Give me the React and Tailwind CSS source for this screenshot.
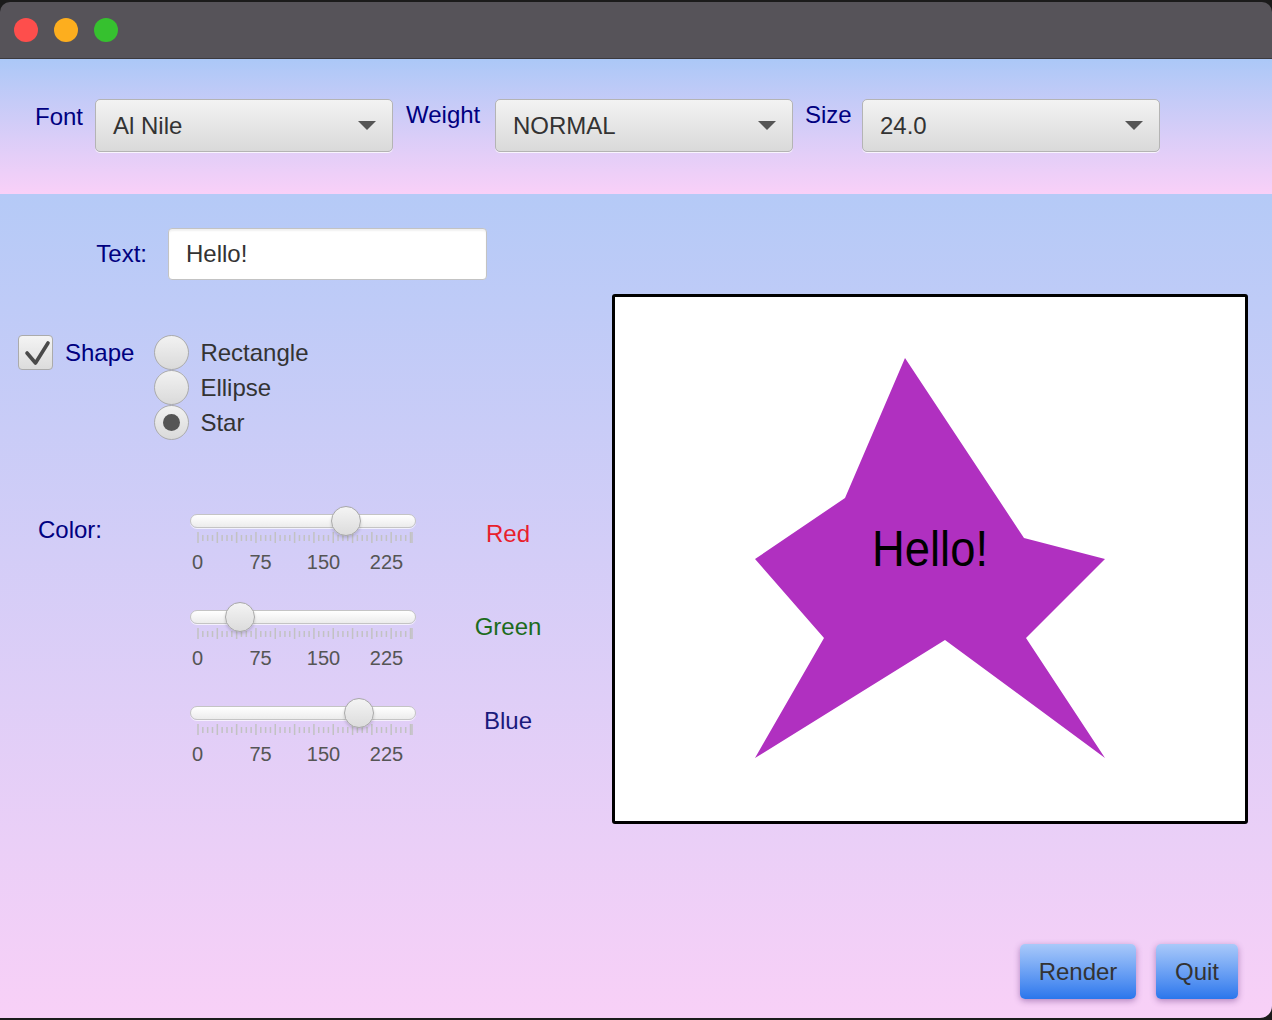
import React from "react";

const FONT = { fontFamily: '"Liberation Sans", Arial, sans-serif' };

const ticks = Array.from({ length: 45 }, (_, i) => i);

function Combo({ value, width = "w-[298px]" }) {
  return (
    <div
      className={`${width} h-[53px] flex items-center justify-between pl-[17px] pr-[16px] rounded-[5px] border border-[#b4b4b4] bg-linear-to-b from-[#f3f3f3] to-[#d9d9d9] shadow-[0_1px_0_rgba(255,255,255,0.8)]`}
    >
      <span className="text-[24px] text-[#333]">{value}</span>
      <svg width="18" height="9" viewBox="0 0 18 9">
        <path d="M0 0 L18 0 L9 9 Z" fill="#555" />
      </svg>
    </div>
  );
}

function Slider({ value, label, color, labelTop }) {
  const thumbLeft = 8 + (value * 214) / 255 - 15;
  return (
    <div className="flex">
      <div className="w-[226px] flex flex-col">
        <div className="relative h-[30px] flex items-center">
          <div className="w-full h-[14px] rounded-full border border-[#c4c4c4] bg-linear-to-b from-[#ffffff] to-[#ececec] shadow-[0_1px_0_rgba(255,255,255,0.7)]" />
          <div
            className="absolute top-0 w-[30px] h-[30px] rounded-full border border-[#a8a8a8] bg-linear-to-b from-[#f4f4f4] to-[#dcdcdc] shadow-[0_2px_3px_rgba(0,0,0,0.15)]"
            style={{ left: thumbLeft }}
          />
        </div>
        <svg width="226" height="11" className="-mt-[4px]">
          {ticks.map((i) => {
            const x = 8 + i * 4.83;
            const major = i % 4 === 0;
            return (
              <line
                key={i}
                x1={x}
                x2={x}
                y1={major ? 0 : 3}
                y2={major ? 11 : 9}
                stroke="#c2c2c2"
                strokeWidth="1.5"
              />
            );
          })}
          <line x1="222" x2="222" y1="0" y2="11" stroke="#c2c2c2" strokeWidth="1.5" />
        </svg>
        <div className="flex w-[252px] -ml-[24px] mt-[7px] text-[20px] leading-[24px] text-[#555]">
          <span className="w-[63px] text-center">0</span>
          <span className="w-[63px] text-center">75</span>
          <span className="w-[63px] text-center">150</span>
          <span className="w-[63px] text-center">225</span>
        </div>
      </div>
      <div className={`w-[184px] text-center text-[24px] leading-[36px] ${labelTop} ${color}`}>
        {label}
      </div>
    </div>
  );
}

function Radio({ label, checked }) {
  return (
    <div className="flex items-center h-[35px]">
      <div className="w-[35px] h-[35px] rounded-full border border-[#ababab] bg-linear-to-b from-[#f2f2f2] to-[#dadada] flex items-center justify-center">
        {checked && <div className="w-[17px] h-[17px] rounded-full bg-[#555]" />}
      </div>
      <span className="ml-[11px] text-[24px] text-[#333]">{label}</span>
    </div>
  );
}

export default function App() {
  return (
    <div style={FONT} className="w-[1272px] h-[1020px] bg-[#1b1b1b] flex flex-col overflow-hidden">
      {/* title bar */}
      <div className="h-[57px] mt-[2px] rounded-t-[10px] bg-[#565359] border-b border-[#3c3a3e] flex items-center pl-[14px] gap-[16px] shrink-0">
        <div className="w-[24px] h-[24px] rounded-full bg-[#fe4e4c]" />
        <div className="w-[24px] h-[24px] rounded-full bg-[#fdae1e]" />
        <div className="w-[24px] h-[24px] rounded-full bg-[#36c12f]" />
      </div>

      {/* toolbar */}
      <div className="h-[135px] shrink-0 bg-linear-to-b from-[#abc8f7] to-[#f9d0f8] flex items-start pt-[40px] pl-[35px]">
        <span className="w-[60px] text-[24px] leading-[36px] text-[#000080]">Font</span>
        <Combo value="Al Nile" />
        <span className="ml-[13px] w-[89px] text-[24px] leading-[32px] text-[#000080]">Weight</span>
        <Combo value="NORMAL" />
        <span className="ml-[12px] w-[57px] text-[24px] leading-[32px] text-[#000080]">Size</span>
        <Combo value="24.0" />
      </div>

      {/* main */}
      <div className="flex-1 rounded-br-[12px] mb-[2px] bg-linear-to-b from-[#b5caf7] to-[#f8d0f7] flex flex-col">
        <div className="flex">
          <div className="w-[612px] flex flex-col">
            {/* text row */}
            <div className="flex items-center mt-[34px]">
              <span className="w-[147px] text-right text-[24px] text-[#000080]">Text:</span>
              <div className="ml-[21px] w-[319px] h-[52px] rounded-[4px] border border-[#c3c3c3] bg-white shadow-[inset_0_2px_2px_rgba(0,0,0,0.06)] flex items-center pl-[17px] text-[24px] text-[#333]">
                Hello!
              </div>
            </div>

            {/* shape row */}
            <div className="flex items-start mt-[55px]">
              <div className="ml-[18px] w-[35px] h-[35px] rounded-[4px] border border-[#ababab] bg-linear-to-b from-[#f4f4f4] to-[#dcdcdc] flex items-center justify-center">
                <svg width="30" height="30" viewBox="0 0 30 30">
                  <path
                    d="M6 15 L14.5 25 L27 5"
                    fill="none"
                    stroke="#4a4a4a"
                    strokeWidth="3.6"
                    strokeLinecap="round"
                    strokeLinejoin="round"
                  />
                </svg>
              </div>
              <span className="ml-[12px] text-[24px] leading-[35px] text-[#000080]">Shape</span>
              <div className="ml-[20px] flex flex-col">
                <Radio label="Rectangle" />
                <Radio label="Ellipse" />
                <Radio label="Star" checked />
              </div>
            </div>

            {/* colour sliders */}
            <div className="flex mt-[66px]">
              <span className="w-[190px] pl-[38px] mt-[6px] text-[24px] leading-[36px] text-[#000080]">
                Color:
              </span>
              <div className="flex flex-col gap-[28px]">
                <Slider value={176} label="Red" color="text-[#e81e2c]" labelTop="mt-[10px]" />
                <Slider value={50} label="Green" color="text-[#1c6b1c]" labelTop="mt-[7px]" />
                <Slider value={192} label="Blue" color="text-[#1a1a7c]" labelTop="mt-[5px]" />
              </div>
            </div>
          </div>

          {/* canvas */}
          <div className="mt-[100px] w-[636px] h-[530px] border-[3px] border-black rounded-[3px] bg-white">
            <svg width="630" height="524" viewBox="615 297 630 524">
              <polygon
                points="905,358 845,498 755,559 824,638 755,758 945,640 1105,758 1026,638 1105,559 1024,538"
                fill="#b030c0"
              />
              <text
                x="872"
                y="566"
                fontSize="50"
                textLength="116"
                lengthAdjust="spacingAndGlyphs"
                fill="#000"
                style={FONT}
              >
                Hello!
              </text>
            </svg>
          </div>
        </div>

        {/* buttons */}
        <div className="mt-auto flex justify-end gap-[20px] pr-[34px] pb-[19px]">
          <button className="w-[116px] h-[55px] rounded-[5px] bg-linear-to-b from-[#a9c9f9] to-[#2a76ec] text-[24px] text-[#333] shadow-[0_2px_6px_rgba(90,40,120,0.45)]">
            Render
          </button>
          <button className="w-[82px] h-[55px] rounded-[5px] bg-linear-to-b from-[#a9c9f9] to-[#2a76ec] text-[24px] text-[#333] shadow-[0_2px_6px_rgba(90,40,120,0.45)]">
            Quit
          </button>
        </div>
      </div>
    </div>
  );
}
